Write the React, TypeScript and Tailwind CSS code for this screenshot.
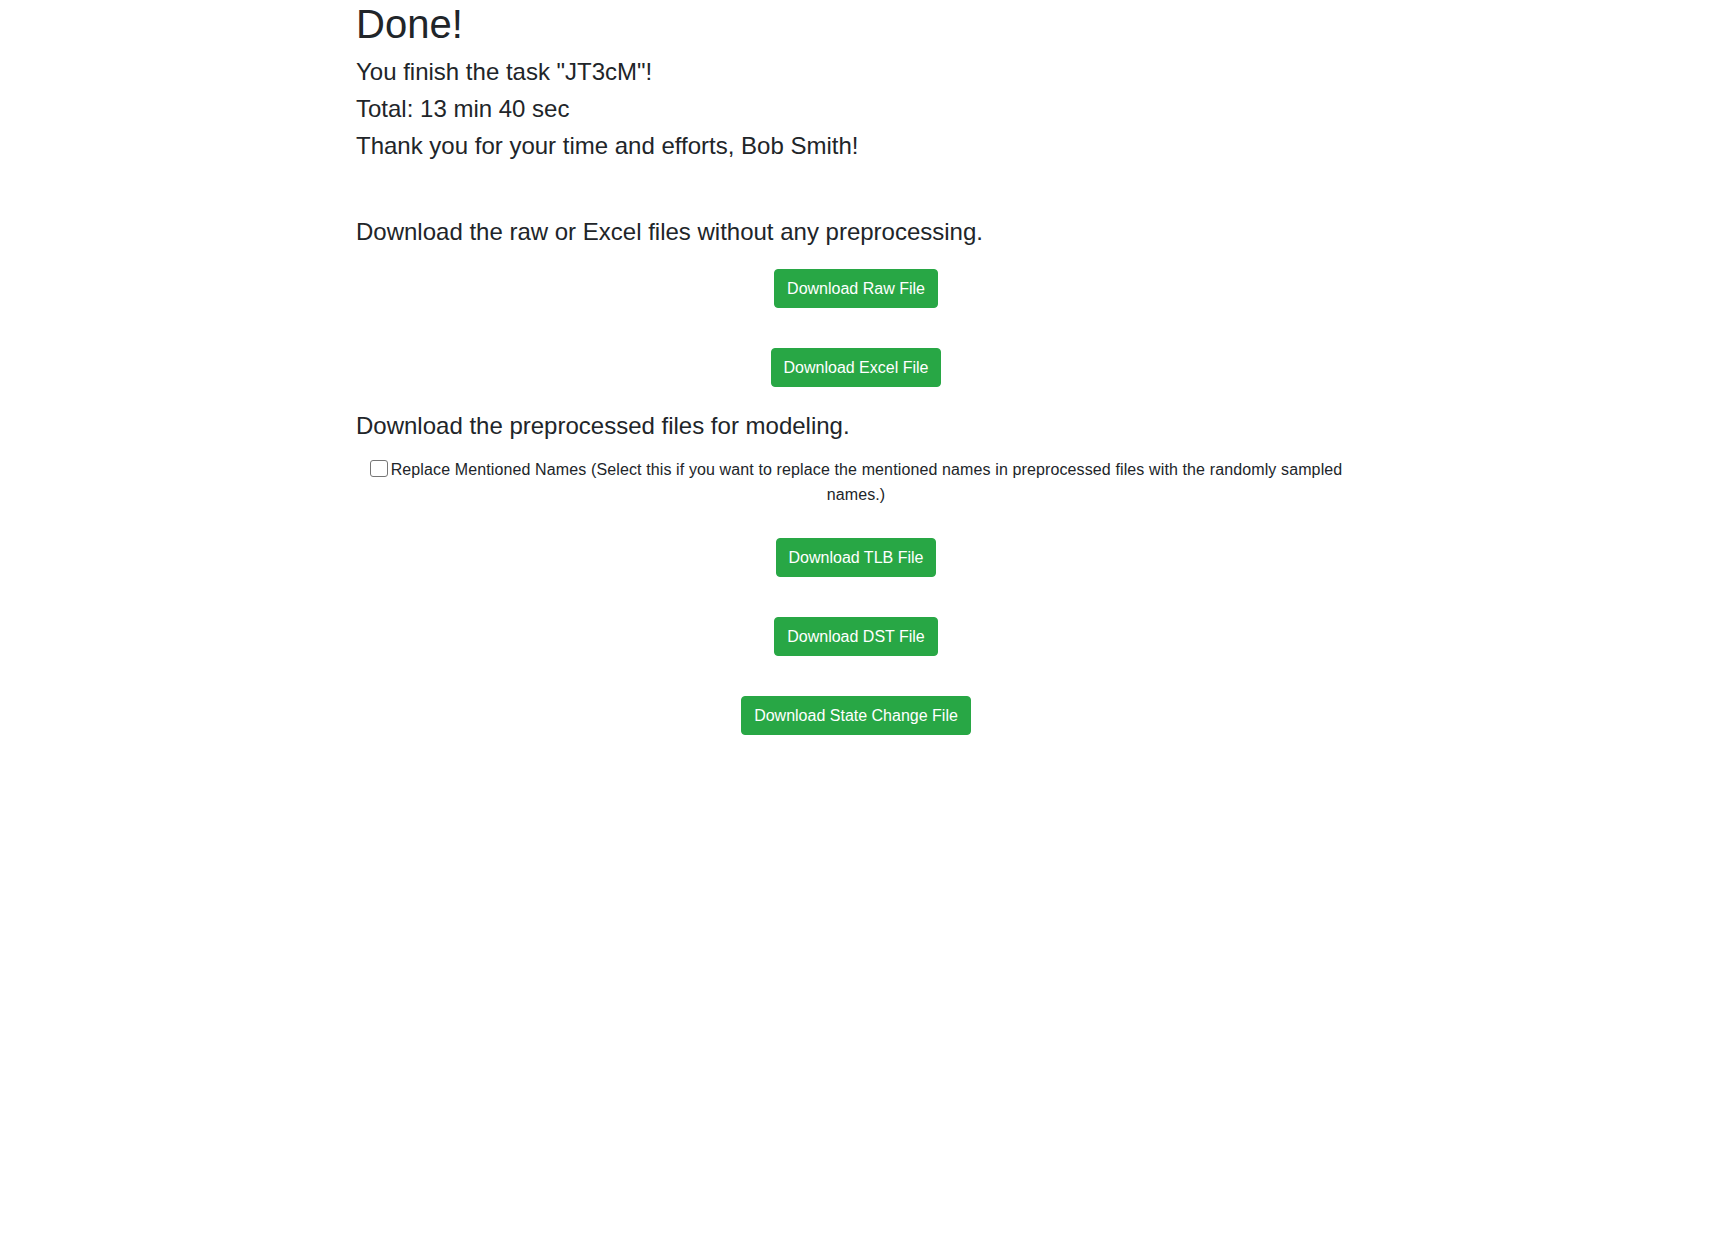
import React, { useState } from 'react';

const DownloadButton: React.FC<{ label: string }> = ({ label }) => (
    <button
        type="button"
        className="inline-block px-3 py-1.5 text-base leading-[25px] text-white bg-[#28a745] border border-[#28a745] rounded hover:bg-[#218838]"
    >
        {label}
    </button>
);

const App: React.FC = () => {
    const [replaceNames, setReplaceNames] = useState(false);

    return (
        <div className="min-h-screen bg-white text-[#212529] font-['Liberation_Sans',Arial,sans-serif]">
            <div className="w-[1000px] mx-auto">
                <h1 className="text-[40px] leading-[1.2] font-medium mb-[10px]">Done!</h1>
                <h4 className="text-2xl leading-[1.2] font-medium mb-2">You finish the task "JT3cM"!</h4>
                <h4 className="text-2xl leading-[1.2] font-medium mb-2">Total: 13 min 40 sec</h4>
                <h4 className="text-2xl leading-[1.2] font-medium mb-2">Thank you for your time and efforts, Bob Smith!</h4>

                <h4 className="mt-[58px] text-2xl leading-[1.2] font-medium mb-2">
                    Download the raw or Excel files without any preprocessing.
                </h4>
                <div className="flex flex-col items-center gap-10 mt-[22px]">
                    <DownloadButton label="Download Raw File" />
                    <DownloadButton label="Download Excel File" />
                </div>

                <h4 className="mt-[25px] text-2xl leading-[1.2] font-medium mb-2">
                    Download the preprocessed files for modeling.
                </h4>
                <div className="mt-4 text-center text-base leading-[25px] tracking-[0.12px]">
                    <label>
                        <input
                            type="checkbox"
                            checked={replaceNames}
                            onChange={(e) => setReplaceNames(e.target.checked)}
                            className="appearance-none align-[-2px] w-[18px] h-[17px] mr-[3px] bg-white border border-[#767676] rounded-[3px] checked:bg-[#0075ff]"
                        />
                        Replace Mentioned Names (Select this if you want to replace the mentioned names in preprocessed files with the randomly sampled names.)
                    </label>
                </div>
                <div className="flex flex-col items-center gap-10 mt-[31px] pb-10">
                    <DownloadButton label="Download TLB File" />
                    <DownloadButton label="Download DST File" />
                    <DownloadButton label="Download State Change File" />
                </div>
            </div>
        </div>
    );
};

export default App;
